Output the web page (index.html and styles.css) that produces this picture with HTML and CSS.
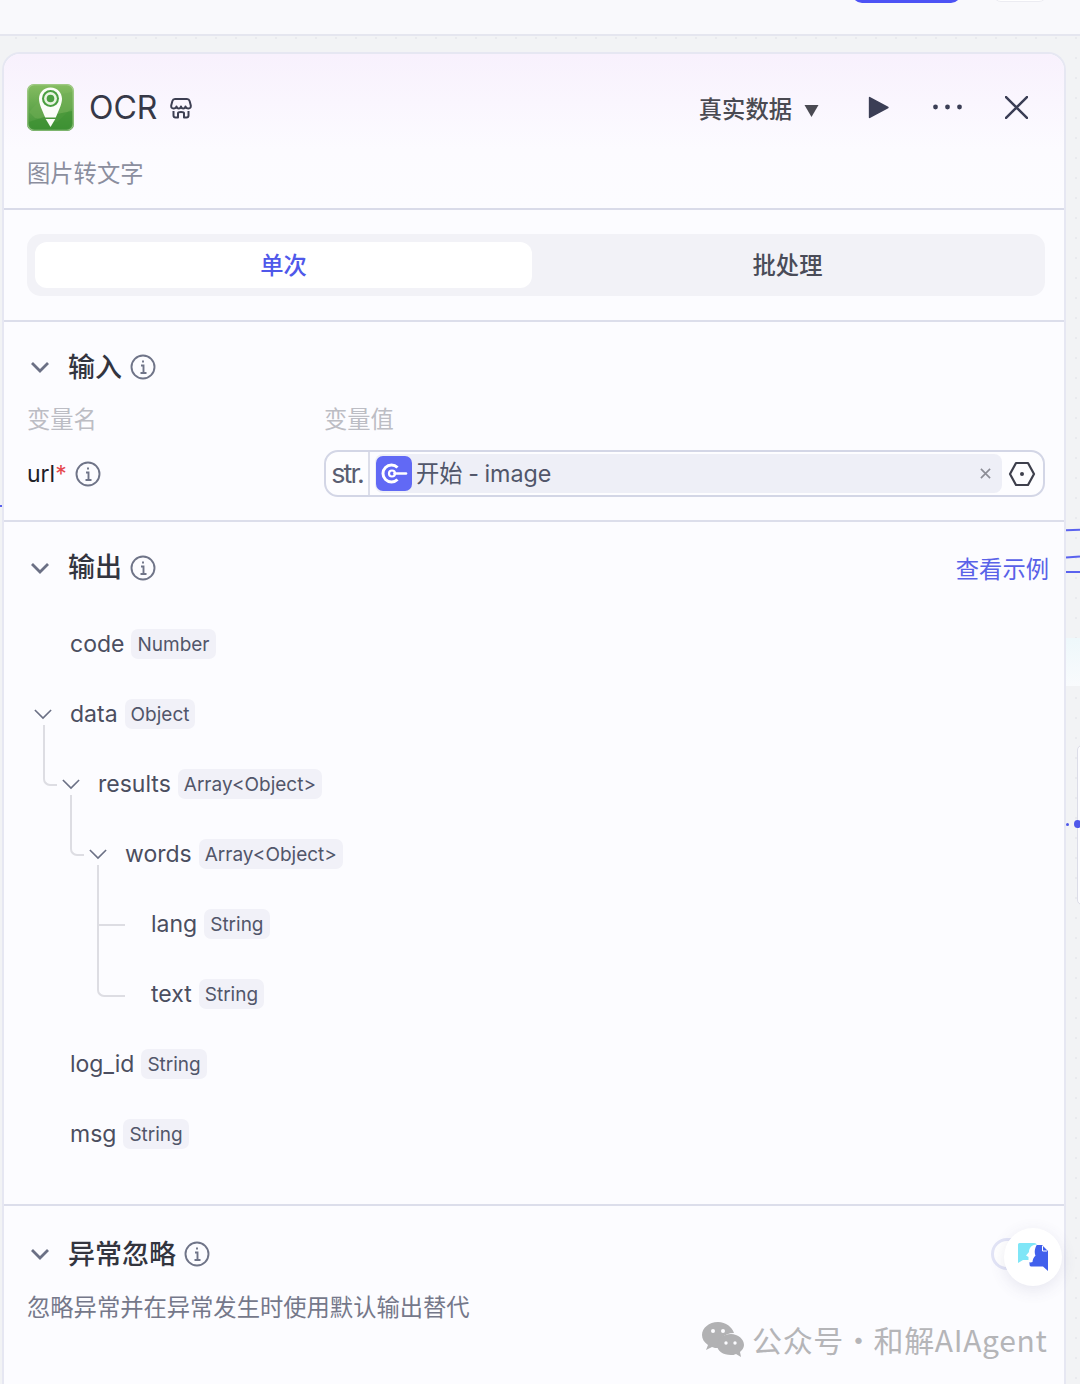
FILE: index.html
```html
<!DOCTYPE html>
<html lang="zh">
<head>
<meta charset="utf-8">
<title>OCR</title>
<link rel="stylesheet" href="styles.css">
</head>
<body>
<div class="topbar">
  <span class="top-primary"></span>
  <span class="top-secondary"></span>
</div>

<div class="canvas-bits">
  <span class="edge edge-a"></span>
  <span class="edge edge-b"></span>
  <span class="edge edge-c"></span>
  <span class="edge edge-left"></span>
  <span class="node-strip"></span>
  <span class="node-card"></span>
  <span class="dot dot-small"></span>
  <span class="dot dot-big"></span>
</div>

<main class="panel">
  <header class="head">
    <div class="head-row">
      <svg class="logo" viewBox="0 0 47 47" aria-hidden="true">
        <defs>
          <linearGradient id="lg" x1="0" y1="0" x2="0" y2="1">
            <stop offset="0" stop-color="#86bd62"/>
            <stop offset="1" stop-color="#3f9136"/>
          </linearGradient>
        </defs>
        <rect width="47" height="47" rx="7" fill="url(#lg)"/>
        <rect x=".75" y=".75" width="45.500" height="45.500" rx="6.500" fill="none" stroke="#b5d4a0" stroke-width="1.200" opacity=".7"/>
        <path d="M2 28 L14 15 L45 8 V24 L30 38 L8 34Z" fill="#6fad54" opacity=".55"/>
        <path d="M2 38 L20 32 L45 27 V38 a7 7 0 0 1 -7 7 H9 a7 7 0 0 1 -7 -7Z" fill="#3a8f30" opacity=".6"/>
        <path d="M23.500 3.500 C16.500 3.500 12 9 12 14.800 C12 20 15 26 18.200 33.500 H28.800 C32 26 35 20 35 14.800 C35 9 30.500 3.500 23.500 3.500Z" fill="#fbfdf8"/>
        <circle cx="23.500" cy="14.500" r="8.500" fill="#4b9f41"/>
        <circle cx="23.500" cy="14.500" r="6.400" fill="#e9f4e1"/>
        <circle cx="23.500" cy="14.500" r="3.800" fill="#4b9f41"/>
        <path d="M18.700 35 H28.300 L23.500 43Z" fill="#fbfdf8"/>
      </svg>
      <h1 class="title">OCR</h1>
      <svg class="store" viewBox="0 0 22 22" aria-hidden="true">
        <path d="M5 2 H17 Q19 2 19.600 4 L20.800 8.500 Q21 11.500 18.500 11.500 Q16 11.500 15.500 9.500 Q15 11.500 13.200 11.500 Q11.500 11.500 11 9.500 Q10.500 11.500 8.800 11.500 Q7 11.500 6.500 9.500 Q6 11.500 3.500 11.500 Q1 11.500 1.200 8.500 L2.400 4 Q3 2 5 2Z" fill="none" stroke="#3d3f52" stroke-width="2" stroke-linejoin="round"/>
        <path d="M3.500 14 V18.500 Q3.500 20.500 5.500 20.500 H8 V16 Q8 15 11 15 Q14 15 14 16 V20.500 H16.500 Q18.500 20.500 18.500 18.500 V14" fill="none" stroke="#3d3f52" stroke-width="2" stroke-linejoin="round"/>
      </svg>
      <div class="head-actions">
        <span class="mode">真实数据</span>
        <svg class="caret" viewBox="0 0 14 12" aria-hidden="true"><path d="M0 0 H14 L7 12Z" fill="#4a4a52"/></svg>
        <svg class="play" viewBox="0 0 20 22" aria-hidden="true"><path d="M1.500 1.500 L19 11 L1.500 20.500Z" fill="#3b3e55" stroke="#3b3e55" stroke-width="1.500" stroke-linejoin="round"/></svg>
        <svg class="more" viewBox="0 0 30 6" aria-hidden="true"><circle cx="3" cy="3" r="2.400"/><circle cx="15" cy="3" r="2.400"/><circle cx="27" cy="3" r="2.400"/></svg>
        <svg class="close" viewBox="0 0 22 22" aria-hidden="true"><path d="M1 1 L21 21 M21 1 L1 21" stroke="#3b3e55" stroke-width="2.400" stroke-linecap="round" fill="none"/></svg>
      </div>
    </div>
    <p class="desc">图片转文字</p>
  </header>

  <section class="tabs-section">
    <div class="tabs">
      <div class="tab tab-active">单次</div>
      <div class="tab">批处理</div>
    </div>
  </section>

  <section class="sec sec-input">
    <div class="sec-head">
      <svg class="chev" viewBox="0 0 20 12" aria-hidden="true"><path d="M2 2 L10 10 L18 2" fill="none" stroke="#6b7085" stroke-width="2.800"/></svg>
      <h2 class="sec-title">输入</h2>
      <svg class="info" viewBox="0 0 26 26" aria-hidden="true"><circle cx="13" cy="13" r="11.500"/><path d="M11 11.500 H13.500 V19 M10.500 19 H16.500 M13 6.500 V8.500"/></svg>
    </div>
    <div class="var-grid var-labels">
      <span>变量名</span>
      <span>变量值</span>
    </div>
    <div class="var-grid var-row">
      <div class="var-name">
        <span>url</span><span class="req">*</span>
        <svg class="info" viewBox="0 0 26 26" aria-hidden="true"><circle cx="13" cy="13" r="11.500"/><path d="M11 11.500 H13.500 V19 M10.500 19 H16.500 M13 6.500 V8.500"/></svg>
      </div>
      <div class="value-box">
        <span class="str">str.</span>
        <div class="chip">
          <span class="chip-icon">
            <svg viewBox="0 0 35 35" aria-hidden="true"><path d="M20.500 11.500 A8.500 8.500 0 1 0 20.500 23.500" fill="none" stroke="#fff" stroke-width="3"/><circle cx="15" cy="17.500" r="3" fill="none" stroke="#fff" stroke-width="2.200"/><path d="M17.500 17.500 H29" stroke="#fff" stroke-width="2.600" stroke-linecap="round"/></svg>
          </span>
          <span class="chip-text">开始 - image</span>
          <svg class="chip-x" viewBox="0 0 12 12" aria-hidden="true"><path d="M1 1 L11 11 M11 1 L1 11" stroke="#8c8d96" stroke-width="1.800" fill="none"/></svg>
        </div>
        <svg class="hex" viewBox="0 0 28 26" aria-hidden="true"><path d="M8 2 H20 L26 13 L20 24 H8 L2 13Z" fill="none" stroke="#3d3f4c" stroke-width="2.200" stroke-linejoin="round"/><circle cx="14" cy="13" r="2" fill="#3d3f4c"/></svg>
      </div>
    </div>
  </section>

  <section class="sec sec-output">
    <div class="sec-head">
      <svg class="chev" viewBox="0 0 20 12" aria-hidden="true"><path d="M2 2 L10 10 L18 2" fill="none" stroke="#6b7085" stroke-width="2.800"/></svg>
      <h2 class="sec-title">输出</h2>
      <svg class="info" viewBox="0 0 26 26" aria-hidden="true"><circle cx="13" cy="13" r="11.500"/><path d="M11 11.500 H13.500 V19 M10.500 19 H16.500 M13 6.500 V8.500"/></svg>
      <a class="example">查看示例</a>
    </div>
    <div class="tree">
      <div class="row"><span class="name">code</span><span class="tag">Number</span></div>
      <div class="row">
        <svg class="tchev tchev-0" viewBox="0 0 20 12" aria-hidden="true"><path d="M1 1 L10 10 L19 1" fill="none" stroke="#6b7085" stroke-width="1.800"/></svg>
        <span class="name">data</span><span class="tag">Object</span>
        <span class="link link-data"></span>
      </div>
      <div class="row lvl-1">
        <svg class="tchev tchev-1" viewBox="0 0 20 12" aria-hidden="true"><path d="M1 1 L10 10 L19 1" fill="none" stroke="#6b7085" stroke-width="1.800"/></svg>
        <span class="name">results</span><span class="tag">Array&lt;Object&gt;</span>
        <span class="link link-results"></span>
      </div>
      <div class="row lvl-2">
        <svg class="tchev tchev-2" viewBox="0 0 20 12" aria-hidden="true"><path d="M1 1 L10 10 L19 1" fill="none" stroke="#6b7085" stroke-width="1.800"/></svg>
        <span class="name">words</span><span class="tag">Array&lt;Object&gt;</span>
        <span class="link link-words"></span>
        <span class="link link-words-tick"></span>
      </div>
      <div class="row lvl-3"><span class="name">lang</span><span class="tag">String</span></div>
      <div class="row lvl-3"><span class="name">text</span><span class="tag">String</span></div>
      <div class="row"><span class="name">log_id</span><span class="tag">String</span></div>
      <div class="row"><span class="name">msg</span><span class="tag">String</span></div>
    </div>
  </section>

  <section class="sec sec-ignore">
    <div class="sec-head">
      <svg class="chev" viewBox="0 0 20 12" aria-hidden="true"><path d="M2 2 L10 10 L18 2" fill="none" stroke="#6b7085" stroke-width="2.800"/></svg>
      <h2 class="sec-title">异常忽略</h2>
      <svg class="info" viewBox="0 0 26 26" aria-hidden="true"><circle cx="13" cy="13" r="11.500"/><path d="M11 11.500 H13.500 V19 M10.500 19 H16.500 M13 6.500 V8.500"/></svg>
    </div>
    <p class="ignore-desc">忽略异常并在异常发生时使用默认输出替代</p>
  </section>
</main>

<span class="toggle"></span>
<div class="fab">
  <svg viewBox="0 0 32 30" aria-hidden="true">
    <path d="M2.500 1 H17 Q20 1 20 4 V18 H6 L1 21 V2.500 Q1 1 2.500 1Z" fill="#7fe6f7"/>
    <path d="M18 3 H25 L31 9 V29 L26 24.500 H14 Q12.500 24.500 12.500 22 V12 Q13 4 18 3Z" fill="#4160ec"/>
    <path d="M20 2.500 C15 2.500 12 5.500 12 10 L9 13.500 L11.500 15 V18.500 C11.500 20.500 13.500 21 15.500 20 C15.800 17 16.500 15.500 18.500 13.500 C17 10 18 5.500 20 2.500Z" fill="#fff"/>
    <path d="M25.500 4 V9 H30" fill="none" stroke="#fff" stroke-width="1"/>
  </svg>
</div>
<div class="watermark">
  <svg viewBox="0 0 42 36" aria-hidden="true">
    <path d="M16 1 C7 1 0 7 0 14 C0 18 2 21 6 24 L4 29 L10 26 C12 27 14 27 16 27 C15 19 22 12 32 12 C30 6 24 1 16 1Z" fill="#b1b1b3"/>
    <path d="M29 13 C21 13 15 18 15 24 C15 30 21 34 29 34 C31 34 32 34 34 33 L39 36 L38 31 C40 29 42 27 42 24 C42 18 36 13 29 13Z" fill="#b1b1b3"/>
    <circle cx="11" cy="10" r="2" fill="#fcfcff"/><circle cx="21" cy="10" r="2" fill="#fcfcff"/>
    <circle cx="24" cy="22" r="1.700" fill="#fcfcff"/><circle cx="33" cy="22" r="1.700" fill="#fcfcff"/>
  </svg>
  <span>公众号 · 和解AIAgent</span>
</div>
</body>
</html>
```
FILE: styles.css
```css
* { box-sizing: border-box; }
html, body { margin: 0; padding: 0; }
body {
  position: relative;
  width: 1080px;
  height: 1384px;
  overflow: hidden;
  background-color: #f2f3f5;
  background-image: radial-gradient(circle, #e9eaee 1px, transparent 1.2px);
  background-size: 20px 20px;
  background-position: 6px 8px;
  font-family: Inter, "Noto Sans CJK SC", sans-serif;
  color: #3a3c4b;
}
h1, h2, p { margin: 0; font: inherit; }

.topbar {
  position: relative;
  height: 36px;
  background: #f9f9fc;
  border-bottom: 2px solid #e5e6ef;
}
.top-primary {
  position: absolute; left: 852px; top: -8px; width: 109px; height: 11px;
  background: #4d53f5; border-radius: 0 0 10px 10px;
}
.top-secondary {
  position: absolute; left: 993px; top: -8px; width: 54px; height: 10px;
  background: #fff; border: 1px solid #ececf2; border-radius: 0 0 8px 8px;
}

.canvas-bits span { position: absolute; display: block; }
.edge { background: #5a62ee; height: 2px; }
.edge-a { left: 1066px; top: 529px; width: 14px; transform: rotate(-3deg); }
.edge-b { left: 1066px; top: 556px; width: 14px; transform: rotate(-5deg); }
.edge-c { left: 1066px; top: 571px; width: 14px; }
.edge-left { left: 0; top: 505px; width: 3px; }
.node-strip { left: 1066px; top: 638px; width: 14px; height: 48px; background: linear-gradient(#eef8fb, #f9fbfd); }
.node-card { left: 1077px; top: 745px; width: 10px; height: 160px; background: #fcfcfe; border: 1px solid #dcdde8; border-radius: 6px; }
.dot { background: #4f58ea; border-radius: 50%; }
.dot-small { left: 1066px; top: 823px; width: 3px; height: 3px; }
.dot-big { left: 1074px; top: 820px; width: 7px; height: 8px; }

.panel {
  position: relative;
  width: 1064px;
  height: 1400px;
  margin: 16px 0 0 2px;
  background: #fcfcff;
  border: 2px solid #e6e7f2;
  border-bottom: 0;
  border-radius: 18px 18px 0 0;
  overflow: hidden;
}

.head {
  height: 156px;
  padding: 30px 17px 0 23px;
  background: linear-gradient(#f8f1fd, #fcfbff 62%, #fcfcff);
  border-bottom: 2px solid #d9dbe9;
}
.head-row { display: flex; align-items: center; height: 47px; }
.logo { width: 47px; height: 47px; flex: none; }
.title { margin-left: 15px; font-size: 32px; line-height: 47px; color: #363847; font-weight: 400; }
.store { width: 22px; height: 22px; margin-left: 13px; flex: none; }
.head-actions { margin-left: auto; display: flex; align-items: center; }
.mode { font-size: 23.300px; font-weight: 500; color: #4a4a52; }
.caret { width: 15px; height: 12px; margin-left: 12px; margin-top: 7px; }
.play { width: 21px; height: 23px; margin-left: 49px; }
.more { width: 31px; height: 6px; margin-left: 43px; margin-bottom: 2px; fill: #3b3e55; }
.close { width: 23px; height: 23px; margin-left: 42px; margin-right: 19px; }
.desc { margin-top: 26px; font-size: 23.300px; line-height: 34px; color: #8b8e9e; }

.tabs-section {
  height: 112px;
  padding: 24px 19px 0 23px;
  border-bottom: 2px solid #dcdeeb;
}
.tabs {
  display: grid;
  grid-template-columns: 497px 1fr;
  gap: 6px;
  height: 62px;
  padding: 8px;
  background: #f2f2f7;
  border-radius: 14px;
}
.tab {
  display: flex; align-items: center; justify-content: center;
  padding-bottom: 2px;
  font-size: 23.300px; font-weight: 500; color: #4a4c58;
}
.tab-active { background: #fff; border-radius: 12px; color: #4f58ea; }

.sec { padding: 0 19px 0 23px; }
.sec-input { height: 200px; border-bottom: 2px solid #dcdeeb; }
.sec-output { height: 684px; border-bottom: 2px solid #dcdeeb; }
.sec-head { display: flex; align-items: center; height: 90px; }
.sec-output .sec-head { height: 91px; }
.sec-ignore .sec-head { height: 96px; }
.chev { width: 20px; height: 12px; margin-left: 3px; flex: none; }
.sec-title { margin-left: 18px; margin-bottom: 4px; font-size: 27px; font-weight: 500; color: #33353f; }
.info {
  width: 26px; height: 26px; margin-left: 8px; flex: none;
  fill: none; stroke: #6f7488; stroke-width: 1.900;
}
.example { margin-left: auto; margin-right: -4px; font-size: 23.300px; color: #5962e8; }

.var-grid { display: grid; grid-template-columns: 297px 1fr; align-items: center; }
.var-labels { margin-top: -12px; height: 36px; font-size: 23.300px; color: #bcbdc4; }
.var-row { margin-top: 14px; }
.var-name { display: flex; align-items: center; font-size: 23px; color: #1f2028; }
.req { color: #e5484d; }
.var-name .info { margin-left: 8px; }
.value-box {
  display: flex; align-items: center;
  height: 47px;
  border: 2px solid #d3d6e6;
  border-radius: 14px;
  background: #fdfdff;
}
.str {
  flex: none; width: 44px; height: 43px;
  display: flex; align-items: center; justify-content: center;
  border-right: 2px solid #dcdeea;
  font-size: 27px; letter-spacing: -2px; color: #5a5e72;
}
.chip {
  flex: 1;
  display: flex; align-items: center;
  height: 39px;
  margin-left: 5px;
  background: #eeeff7;
  border-radius: 8px;
}
.chip-icon {
  width: 36px; height: 35px; flex: none;
  margin-left: 1px;
  display: flex; align-items: center; justify-content: center;
  background: #6169f5; border-radius: 7px;
}
.chip-icon svg { width: 35px; height: 35px; }
.chip-text { margin-left: 4px; margin-bottom: 3px; font-size: 23.300px; word-spacing: -1px; color: #51566a; }
.chip-x { width: 11px; height: 11px; margin-left: auto; margin-right: 11px; }
.hex { width: 28px; height: 26px; margin: 0 7px 0 6px; flex: none; }

.tree { margin-top: -4px; }
.row {
  position: relative;
  display: flex; align-items: center;
  height: 70px;
  padding-left: 43px;
}
.lvl-1 { padding-left: 71px; }
.lvl-2 { padding-left: 98px; }
.lvl-3 { padding-left: 124px; }
.name { font-size: 23px; color: #4b4e60; }
.tag {
  display: inline-flex; align-items: center;
  height: 30px; margin-left: 7px; padding: 0 6px;
  background: #f1f1f8; border-radius: 7px;
  font-size: 19px; color: #51566a;
}
.tchev { position: absolute; top: 30px; width: 18px; height: 11px; }
.tchev-0 { left: 7px; }
.tchev-1 { left: 35px; }
.tchev-2 { left: 62px; }
.link { position: absolute; display: block; border-left: 2px solid #dddde3; }
.link-data, .link-results {
  top: 46px; height: 61px; width: 14px;
  border-bottom: 2px solid #dddde3;
  border-bottom-left-radius: 7px;
}
.link-data { left: 16px; }
.link-results { left: 43px; }
.link-words {
  left: 70px; top: 46px; height: 132px; width: 28px;
  border-bottom: 2px solid #dddde3;
  border-bottom-left-radius: 7px;
}
.link-words-tick {
  left: 70px; top: 105px; width: 28px; height: 2px;
  border-left: 0;
  background: #dddde3;
}

.sec-ignore { height: 300px; }
.ignore-desc { margin-top: -11px; font-size: 23.300px; line-height: 34px; color: #75788a; }

.toggle {
  position: absolute; left: 991px; top: 1238px;
  width: 46px; height: 32px;
  background: #fff; border: 3px solid #e2e4f6; border-radius: 16px;
}
.fab {
  position: absolute; left: 1004px; top: 1228px;
  width: 58px; height: 58px;
  display: flex; align-items: center; justify-content: center;
  background: #fff; border-radius: 50%;
  box-shadow: 0 4px 16px rgba(70, 72, 120, .12);
}
.fab svg { width: 32px; height: 30px; }
.watermark {
  position: absolute; left: 702px; top: 1318px;
  display: flex; align-items: center;
  font-family: "Noto Sans CJK SC", sans-serif;
  font-size: 30px; line-height: 42px; letter-spacing: .67px; word-spacing: -8px; color: #b5b5b8;
}
.watermark svg { width: 42px; height: 36px; margin-right: 8px; flex: none; }
```
